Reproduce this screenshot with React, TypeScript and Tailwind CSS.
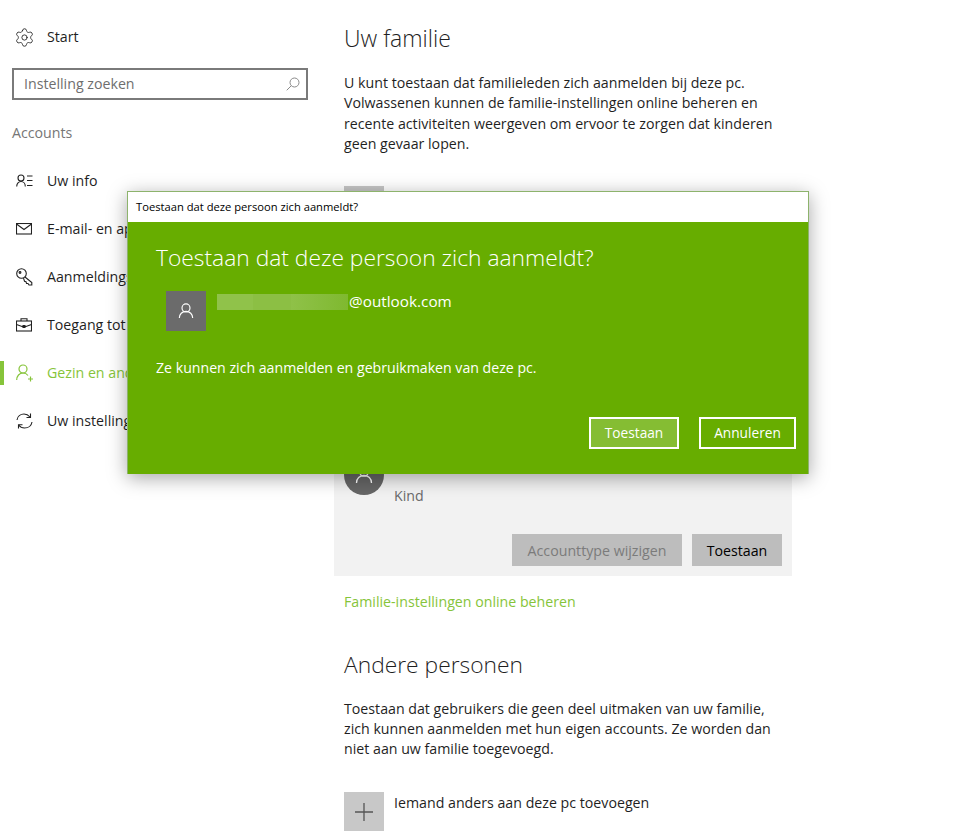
import React from "react";
import { Settings } from "lucide-react";

const font = "font-['Open_Sans','Noto_Sans',sans-serif]";

const InfoIcon = () => (
  <svg width="17" height="14" viewBox="0 0 17 14" fill="none" stroke="#222" strokeWidth="1.1">
    <circle cx="5" cy="4" r="3" />
    <path d="M0.7 12.5c0-3 2-5 4.3-5s4.300 2 4.300 5" />
    <path d="M11 2h5.500M11 6.500h5.500M11 11.500h5.500" />
  </svg>
);

const MailIcon = () => (
  <svg width="16" height="12" viewBox="0 0 16 12" fill="none" stroke="#222" strokeWidth="1.1">
    <rect x="0.500" y="0.500" width="15" height="10.500" />
    <path d="M0.500 1l7.500 5.500 7.500-5.500" />
  </svg>
);

const KeyIcon = () => (
  <svg width="17" height="18" viewBox="0 0 17 18" fill="none" stroke="#222" strokeWidth="1.1">
    <circle cx="5.500" cy="5.500" r="4.800" />
    <circle cx="4" cy="4.500" r="0.900" />
    <path d="M9 9l6.800 5.500v2.500h-2.800l-1-1.500h-1.500l-0.500-1.800-1.500-0.500-1-3" />
  </svg>
);

const CaseIcon = () => (
  <svg width="16" height="14" viewBox="0 0 16 14" fill="none" stroke="#222" strokeWidth="1.1">
    <rect x="0.500" y="3" width="15" height="10" />
    <path d="M5 3V0.700h6V3M0.500 6.500l5.500 2h4l5.500-2" />
    <path d="M7 7.500h2v2H7z" fill="#222" />
  </svg>
);

const FamilyIcon = () => (
  <svg width="18" height="18" viewBox="0 0 18 18" fill="none" stroke="#86c43a" strokeWidth="1.2">
    <circle cx="7" cy="5" r="4" />
    <path d="M0.700 16c0-4 2.700-7 6.300-7 2.200 0 4 1 5 2.500" />
    <path d="M14.500 12.500v5M12 15h5" />
  </svg>
);

const SyncIcon = () => (
  <svg width="17" height="16" viewBox="0 0 17 16" fill="none" stroke="#222" strokeWidth="1.1">
    <path d="M1 7c0.500-3.500 3.500-6 7-6 2.500 0 4.500 1.200 6 3" />
    <path d="M14.500 0.500V4.500h-4" />
    <path d="M16 9c-0.500 3.500-3.500 6-7.500 6-2.500 0-4.500-1.200-5.800-3" />
    <path d="M2.500 15.500V11.800h4" />
  </svg>
);

const PersonGlyph = ({ size = 18 }: { size?: number }) => (
  <svg width={size} height={size} viewBox="0 0 18 18" fill="none" stroke="#fff" strokeWidth="1.300">
    <circle cx="9" cy="5.500" r="4.500" />
    <path d="M1.500 17c0-4.500 3.200-7.500 7.500-7.500s7.500 3 7.500 7.500" />
  </svg>
);

const navItems = [
  { label: "Uw info", icon: <InfoIcon /> },
  { label: "E-mail- en app-accounts", icon: <MailIcon /> },
  { label: "Aanmeldingsopties", icon: <KeyIcon /> },
  { label: "Toegang tot werk", icon: <CaseIcon /> },
  { label: "Gezin en andere personen", icon: <FamilyIcon />, active: true },
  { label: "Uw instellingen synchroniseren", icon: <SyncIcon /> },
];

const Sidebar = () => (
  <aside className="w-[334px] shrink-0 text-[14.200px] text-[#1f1f1f]">
    <div className="flex h-[24px] items-center mt-[25px] pl-[14px]">
      <Settings size={21} strokeWidth={1} className="text-[#222]" />
      <span className="ml-[12px]">Start</span>
    </div>
    <div className="mt-[19px] ml-[12px] flex h-[32px] w-[296px] items-center justify-between border-2 border-[#7a7a7a] pl-[10px] pr-[6px]">
      <span className="-mt-[1px] text-[#6e6e6e]">Instelling zoeken</span>
      <svg width="14" height="14" viewBox="0 0 14 14" fill="none" stroke="#8a8a8a" strokeWidth="1">
        <circle cx="8.500" cy="5.500" r="4.500" />
        <path d="M5.300 8.700L0.700 13.300" />
      </svg>
    </div>
    <div className="mt-[23px] pl-[12px] leading-[20px] text-[#767676]">Accounts</div>
    <nav className="mt-[14px] flex flex-col">
      {navItems.map((item) => (
        <div key={item.label} className="relative flex h-[48px] items-center pl-[16px]">
          {item.active && <div className="absolute left-0 top-[12px] h-[24px] w-[4px] bg-[#86c43a]" />}
          <span className="flex w-[31px] shrink-0">{item.icon}</span>
          <span className={item.active ? "whitespace-nowrap text-[#86c43a]" : "whitespace-nowrap"}>{item.label}</span>
        </div>
      ))}
    </nav>
  </aside>
);

const Main = () => (
  <main className="flex-1 text-[14.200px] text-[#1f1f1f]">
    <h1 className="pl-[10px] pt-[22px] text-[23px] leading-[32px] font-light">Uw familie</h1>
    <p className="ml-[10px] mt-[19px] w-[440px] leading-[20.300px]">
      U kunt toestaan dat familieleden zich aanmelden bij deze pc. Volwassenen kunnen de familie-instellingen online beheren en recente activiteiten weergeven om ervoor te zorgen dat kinderen geen gevaar lopen.
    </p>
    <div className="ml-[10px] mt-[32px] h-[40px] w-[40px] bg-[#c6c6c6]" />
    <div className="mt-[140px] h-[210px] w-[458px] bg-[#f2f2f2] px-[10px] pt-[89px]">
      <div className="flex h-[40px] w-[40px] items-center justify-center rounded-full bg-[#666]">
        <PersonGlyph />
      </div>
      <div className="ml-[50px] -mt-[9px] leading-[20px] text-[#6a6a6a]">Kind</div>
      <div className="mt-[28px] flex justify-end gap-[10px]">
        <div className="flex h-[32px] w-[170px] items-center justify-center bg-[#bdbdbd] text-[#7b7b7b]">Accounttype wijzigen</div>
        <div className="flex h-[32px] w-[90px] items-center justify-center bg-[#bdbdbd] text-black">Toestaan</div>
      </div>
    </div>
    <div className="ml-[10px] mt-[16px] leading-[20px] text-[#86c43a]">Familie-instellingen online beheren</div>
    <h2 className="ml-[10px] mt-[37px] text-[22.800px] leading-[32px] font-light">Andere personen</h2>
    <p className="ml-[10px] mt-[18px] w-[440px] leading-[20px]">
      Toestaan dat gebruikers die geen deel uitmaken van uw familie, zich kunnen aanmelden met hun eigen accounts. Ze worden dan niet aan uw familie toegevoegd.
    </p>
    <div className="ml-[10px] mt-[33px] flex items-start gap-[10px]">
      <div className="flex h-[40px] w-[40px] items-center justify-center bg-[#c8c8c8]">
        <svg width="18" height="18" viewBox="0 0 18 18" stroke="#555" strokeWidth="1.300">
          <path d="M9 0v18M0 9h18" />
        </svg>
      </div>
      <span className="mt-[1px] leading-[20px]">Iemand anders aan deze pc toevoegen</span>
    </div>
  </main>
);

const Dialog = () => (
  <div className="absolute left-[127px] top-[191px] h-[283px] w-[682px] border border-[#8db36c] border-b-0 bg-[#67ad00] text-white shadow-[0_4px_18px_rgba(0,0,0,0.35)]">
    <div className="flex h-[30px] items-center bg-white pl-[8px] text-[11.200px] text-black">Toestaan dat deze persoon zich aanmeldt?</div>
    <div className="pl-[28px] pt-[20px]">
      <div className="text-[22.800px] leading-[32px] font-light text-white">Toestaan dat deze persoon zich aanmeldt?</div>
      <div className="ml-[10px] mt-[17px] flex items-start">
        <div className="flex h-[40px] w-[40px] items-center justify-center bg-[#6b6b6b]">
          <PersonGlyph size={16} />
        </div>
        <div className="ml-[11px] mt-[3px] flex h-[16px] w-[131px]">
          <div className="h-full w-[36px] bg-[#90c24a]" />
          <div className="h-full w-[38px] bg-[#8cbf44]" />
          <div className="h-full w-[57px] bg-gradient-to-r from-[#8fc148] to-[#7fb92f]" />
        </div>
        <span className="ml-[1px] -mt-[1px] text-[15.300px] leading-[22px]">@outlook.com</span>
      </div>
      <div className="mt-[27px] text-[14.150px] leading-[20px]">Ze kunnen zich aanmelden en gebruikmaken van deze pc.</div>
    </div>
    <div className="absolute right-[12px] top-[225px] flex gap-[20px] text-[13.700px]">
      <div className="flex h-[32px] w-[90px] items-center justify-center border-2 border-white bg-white/20">Toestaan</div>
      <div className="flex h-[32px] w-[97px] items-center justify-center border-2 border-white">Annuleren</div>
    </div>
  </div>
);

export default function App() {
  return (
    <div className={`relative h-[831px] w-[958px] overflow-hidden bg-white ${font}`}>
      <div className="flex">
        <Sidebar />
        <Main />
      </div>
      <Dialog />
    </div>
  );
}
